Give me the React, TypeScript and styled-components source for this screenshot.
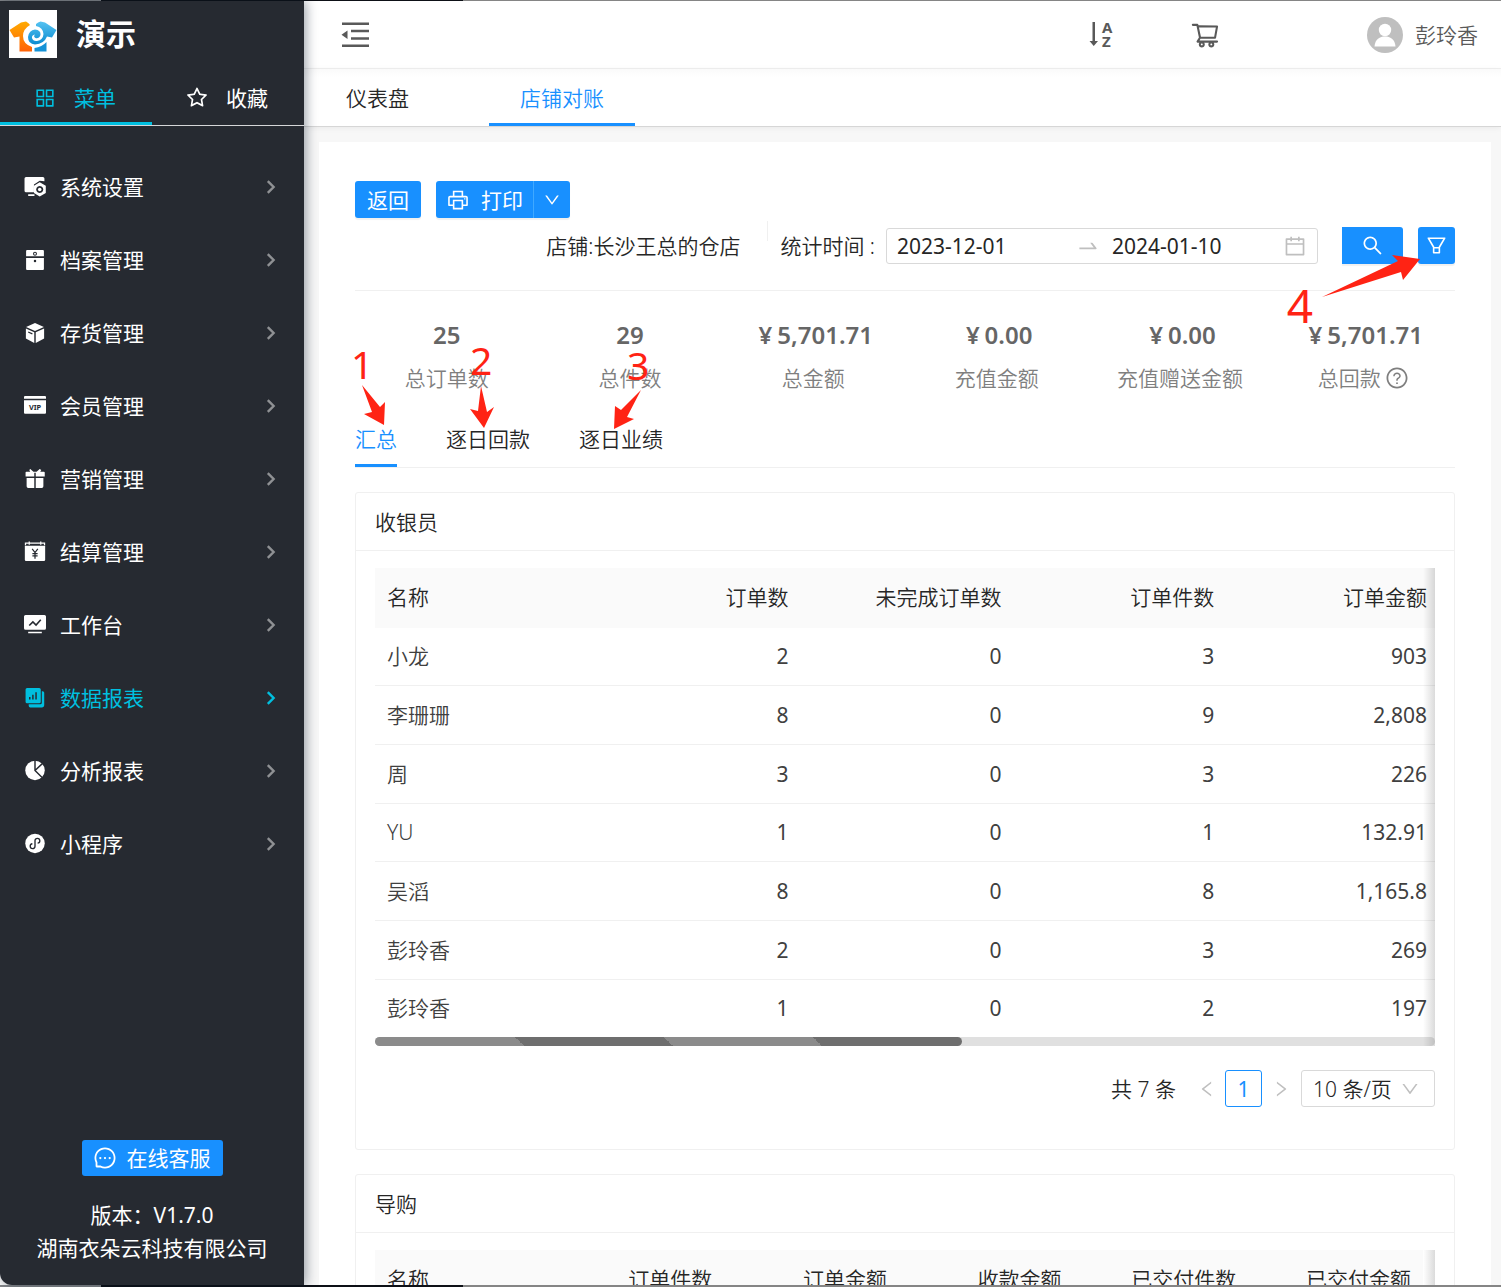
import React from 'react';
import styled, { createGlobalStyle, css } from 'styled-components';
import {
  AiOutlineAppstore,
  AiOutlineCalendar,
  AiOutlineDown,
  AiOutlineFilter,
  AiOutlineLeft,
  AiOutlineMessage,
  AiOutlinePrinter,
  AiOutlineQuestionCircle,
  AiOutlineRight,
  AiOutlineSearch,
  AiOutlineShoppingCart,
  AiOutlineStar,
  AiOutlineSwapRight,
} from 'react-icons/ai';

const color = {
  blue: '#1890ff',
  cyan: '#00bfdf',
  side: '#262a31',
  text: '#262626',
  line: '#f0f0f0',
  border: '#d9d9d9',
  red: '#ff2314',
};

const GlobalStyle = createGlobalStyle`
  *, *::before, *::after { box-sizing: border-box; }
  body {
    margin: 0;
    background: #f7f7f7;
    color: ${color.text};
    font: 400 21px/32px "Noto Sans", "Noto Sans CJK SC", sans-serif;
  }
  button, input, select { font: inherit; color: inherit; margin: 0; }
  button { cursor: pointer; border: 0; padding: 0; background: none; }
  svg { display: block; flex: none; }
`;

/* ---------- frame ---------- */

const Page = styled.div`
  display: flex;
  flex-direction: column;
  height: 100vh;
  overflow: hidden;
`;

const Edge = styled.div<{ $size: number; $stop: number }>`
  flex: none;
  height: ${(p) => p.$size}px;
  background: linear-gradient(90deg, #85878a 101px, #0d1016 101px, #0d1016 ${(p) => p.$stop}px, #858585 ${(p) => p.$stop}px);
`;

const Body = styled.div`
  flex: 1;
  display: flex;
  min-height: 0;
  background: #f7f7f7;
`;

/* ---------- sidebar ---------- */

const Sidebar = styled.aside`
  flex: none;
  width: 304px;
  display: flex;
  flex-direction: column;
  background: ${color.side};
  color: #fff;
  border-bottom-left-radius: 12px;
  box-shadow: 2px 0 12px rgba(0, 21, 41, 0.4);
  z-index: 2;
`;

const Brand = styled.div`
  display: flex;
  align-items: center;
  gap: 19px;
  height: 66px;
  padding: 0 9px;
  font-size: 30px;
  font-weight: 700;
`;

const SideTabs = styled.div`
  display: grid;
  grid-template-columns: 1fr 1fr;
  height: 59px;
  border-bottom: 1px solid #d5d6d8;
`;

const SideTab = styled.button<{ $active?: boolean }>`
  display: flex;
  align-items: center;
  justify-content: center;
  gap: 17px;
  padding: 4px 3px 0 0;
  color: ${(p) => (p.$active ? color.cyan : '#fff')};
  box-shadow: ${(p) => (p.$active ? `inset 0 -3px ${color.cyan}` : 'none')};
`;

const Menu = styled.nav`
  flex: 1;
  padding-top: 24px;
`;

const MenuItem = styled.button<{ $active?: boolean }>`
  display: flex;
  align-items: center;
  gap: 14px;
  width: 100%;
  height: 73px;
  padding: 0 28px 0 24px;
  text-align: left;
  color: ${(p) => (p.$active ? color.cyan : '#fff')};
`;

const MenuText = styled.span`
  flex: 1;
`;

const SideFoot = styled.div`
  display: flex;
  flex-direction: column;
  align-items: center;
  padding-bottom: 20px;
  line-height: 33px;
`;

const SupportButton = styled.button`
  display: flex;
  align-items: center;
  gap: 10px;
  height: 36px;
  padding: 0 12px 0 11px;
  margin-bottom: 23px;
  border-radius: 3px;
  background: ${color.blue};
  color: #fff;
`;

/* ---------- header ---------- */

const Main = styled.main`
  flex: 1;
  min-width: 0;
  display: flex;
  flex-direction: column;
`;

const Header = styled.header`
  flex: none;
  display: flex;
  align-items: center;
  height: 68px;
  padding: 0 23px 0 37px;
  background: #fff;
  border-bottom: 1px solid ${color.line};
  color: #595959;
`;

const Spacer = styled.div`
  flex: 1;
`;

const HeaderTools = styled.div`
  display: flex;
  align-items: center;
  gap: 75px;
  margin-right: 147px;
`;

const User = styled.button`
  display: flex;
  align-items: center;
  gap: 12px;
  font-weight: 350;
`;

const PageTabs = styled.nav`
  flex: none;
  display: flex;
  gap: 49px;
  height: 58px;
  padding-left: 11px;
  background: linear-gradient(#fafafa, #fff 8px);
  border-bottom: 1px solid #d6d6d6;
  box-shadow: 0 1px 6px rgba(0, 0, 0, 0.06);
`;

const PageTab = styled.button<{ $active?: boolean }>`
  padding: 0 31px;
  font-weight: 350;
  color: ${(p) => (p.$active ? color.blue : color.text)};
  box-shadow: ${(p) => (p.$active ? `inset 0 -3px ${color.blue}` : 'none')};
`;

/* ---------- content ---------- */

const Panel = styled.section`
  flex: 1;
  min-height: 0;
  overflow: hidden;
  margin: 15px 10px 0 15px;
  padding: 39px 36px 0;
  background: #fff;
  font-weight: 350;
`;

const Actions = styled.div`
  display: flex;
  gap: 15px;
`;

const Button = styled.button<{ $pad: number }>`
  display: flex;
  align-items: center;
  gap: 11px;
  height: 37px;
  padding: 0 ${(p) => p.$pad}px;
  border-radius: 3px;
  background: ${color.blue};
  color: #fff;
  font-weight: 400;
  box-shadow: 0 2px 1px rgba(0, 0, 0, 0.06);
`;

const SearchButton = styled(Button)`
  border-radius: 0 3px 3px 0;
`;

const Split = styled.div`
  display: flex;
  ${Button}:first-child { border-radius: 3px 0 0 3px; }
  ${Button}:last-child { border-radius: 0 3px 3px 0; border-left: 1px solid #40a9ff; }
`;

const Filters = styled.div`
  position: relative;
  display: flex;
  align-items: center;
  justify-content: flex-end;
  height: 73px;
  padding: 3px 0 20px;
  border-bottom: 1px solid ${color.line};
`;

const Divider = styled.i`
  align-self: flex-start;
  width: 1px;
  height: 20px;
  margin: 0 12px 0 27px;
  background: ${color.line};
`;

const RangeLabel = styled.label`
  margin-right: 11px;
`;

const Range = styled.div`
  display: flex;
  align-items: center;
  width: 432px;
  height: 36px;
  margin-right: 24px;
  padding: 0 10px;
  border: 1px solid ${color.border};
  border-radius: 3px;
  color: #bfbfbf;
`;

const DateInput = styled.input`
  flex: 1;
  min-width: 0;
  padding: 0;
  border: 0;
  outline: 0;
  background: none;
  color: ${color.text};
  font-weight: 400;
`;

const RangeArrow = styled.span`
  margin: 0 12px 0 8px;
`;

const ButtonGap = styled.div`
  display: flex;
  gap: 15px;
`;

const Stats = styled.dl`
  display: grid;
  grid-template-columns: repeat(6, 1fr);
  margin: 0;
  padding-top: 22px;
  text-align: center;
`;

const Stat = styled.div`
  display: flex;
  flex-direction: column-reverse;
`;

const StatLabel = styled.dt`
  display: flex;
  align-items: center;
  justify-content: center;
  gap: 4px;
  height: 42px;
  color: #7f7f7f;
`;

const StatValue = styled.dd`
  margin: 0;
  height: 44px;
  line-height: 44px;
  font-size: 24px;
  font-weight: 600;
  color: #666;
`;

const Currency = styled.span`
  margin: 0 5px;
`;

const Tabs = styled.div`
  position: relative;
  display: flex;
  gap: 49px;
  height: 69px;
  border-bottom: 1px solid ${color.line};
`;

const Tab = styled.button<{ $active?: boolean }>`
  padding-top: 11px;
  font-weight: 350;
  color: ${(p) => (p.$active ? color.blue : color.text)};
  box-shadow: ${(p) => (p.$active ? `inset 0 -3px ${color.blue}` : 'none')};
`;

const Card = styled.section`
  margin-top: 24px;
  border: 1px solid ${color.line};
  border-radius: 3px;
`;

const CardTitle = styled.h2`
  margin: 0;
  height: 58px;
  padding: 0 19px;
  border-bottom: 1px solid ${color.line};
  font-size: 21px;
  font-weight: 350;
  line-height: 59px;
`;

const CardBody = styled.div`
  padding: 17px 19px 42px;
`;

const TableWrap = styled.div`
  position: relative;
  overflow: hidden;
  &::after {
    content: '';
    position: absolute;
    inset: 0 0 0 auto;
    width: 12px;
    background: linear-gradient(90deg, transparent, rgba(0, 0, 0, 0.14));
  }
`;

const Table = styled.table<{ $height: number; $offset: number }>`
  width: calc(100% + ${(p) => p.$offset}px);
  height: ${(p) => p.$height}px;
  table-layout: fixed;
  border-collapse: collapse;
`;

const cell = css`
  padding: 0 12px;
  font-weight: 350;
  white-space: nowrap;
  text-align: right;
  border-bottom: 1px solid ${color.line};
  &:first-child { text-align: left; }
`;

const HeadCell = styled.th`
  ${cell}
  height: 59px;
  background: #fafafa;
  border-bottom-color: #fafafa;
`;

const Cell = styled.td`
  ${cell}
  color: #404040;
  &:not(:first-child) { font-weight: 400; }
  tr:last-child > & { border-bottom: 0; }
`;

const ScrollTrack = styled.div`
  height: 9px;
  border-radius: 5px;
  background: #e0e0e0;
`;

const ScrollThumb = styled.div`
  width: 55.4%;
  height: 9px;
  border-radius: 5px;
  background: linear-gradient(45deg, #8b8b8b 25%, #6e6e6e 25%, #6e6e6e 50%, #8b8b8b 50%, #8b8b8b 75%, #6e6e6e 75%);
`;

const Pager = styled.div`
  display: flex;
  align-items: center;
  justify-content: flex-end;
  height: 37px;
  margin-top: 24px;
`;

const PageArrow = styled.button`
  display: flex;
  justify-content: center;
  width: 37px;
  color: #bfbfbf;
`;

const PageNumber = styled.button`
  width: 37px;
  height: 37px;
  border: 1px solid ${color.blue};
  border-radius: 3px;
  color: ${color.blue};
  font-weight: 400;
`;

const Total = styled.span`
  margin-right: 12px;
`;

const SizeBox = styled.div`
  position: relative;
  width: 134px;
  height: 37px;
  margin-left: 2px;
  border: 1px solid ${color.border};
  border-radius: 3px;
`;

const SizeSelect = styled.select`
  appearance: none;
  width: 100%;
  height: 100%;
  padding: 0 11px;
  border: 0;
  outline: 0;
  background: none;
  font-weight: 350;
`;

const SizeArrow = styled.span`
  position: absolute;
  right: 14px;
  top: 8px;
  color: #bfbfbf;
  pointer-events: none;
`;

/* ---------- red callouts laid over the content ---------- */

const Callout = styled.div<{ $x: number; $y: number; $fromRight?: boolean }>`
  position: absolute;
  z-index: 3;
  top: ${(p) => p.$y}px;
  ${(p) => (p.$fromRight ? 'right' : 'left')}: ${(p) => p.$x}px;
  color: ${color.red};
  pointer-events: none;
`;

const CalloutNumber = styled(Callout)<{ $size: number }>`
  font-size: ${(p) => p.$size}px;
  font-weight: 400;
  line-height: 40px;
`;

/* ---------- drawings ---------- */

const Logo = () => (
  <svg width="48" height="48" viewBox="0 0 48 48" aria-hidden="true">
    <defs>
      <linearGradient id="logo-warm" x1="0" y1="0" x2="0" y2="1">
        <stop offset="0" stopColor="#ffab00" />
        <stop offset="1" stopColor="#ff6208" />
      </linearGradient>
      <linearGradient id="logo-cool" x1="0" y1="0" x2="0" y2="1">
        <stop offset="0" stopColor="#55c3f2" />
        <stop offset="1" stopColor="#0c8bd0" />
      </linearGradient>
    </defs>
    <rect width="48" height="48" fill="#fff" />
    <path d="M12 12.500 L17 11.500 Q20 13 21 15 Q14 19 14 26 Q14 34 23 37 V41.500 H10.500 V26.500 L5 27.500 L0.500 20 Z" fill="url(#logo-warm)" />
    <path d="M27 14 Q29 12 31.500 11.500 L36 12.500 L47.500 20 L43 27.500 L38 26.500 Q35 34 26 34.500 Q19 34 19 27 Q20 20 26 19.500 Q32 20 31.500 25 Q30 29 26.500 28 Q24 26.500 26 24.500 Q22.500 25 23 28 Q24 31.500 28 31 Q34 30 34.500 24 Q34 17.500 27 16 Z" fill="url(#logo-cool)" />
    <path d="M25.500 38 Q33 37 37.500 32 V41.500 H25.500 Z" fill="#1592d6" />
  </svg>
);

const FoldIcon = () => (
  <svg width="28" height="26" viewBox="0 0 28 26" fill="#595959" aria-hidden="true">
    <path d="M1 .5h27v2.500H1zM10 7.800h18v2.500H10zM10 15.200h18v2.500H10zM1 22.500h27V25H1zM.5 12.700L6.500 8.500v8.500z" />
  </svg>
);

const SortIcon = () => (
  <svg width="26" height="30" viewBox="0 0 26 30" fill="#595959" aria-hidden="true">
    <path d="M3.500 2h2.500v19h3L4.750 26 .5 21h3z" />
    <text x="13" y="13" fontSize="15" fontWeight="700" fontFamily="Noto Sans, sans-serif">A</text>
    <text x="13" y="27" fontSize="15" fontWeight="700" fontFamily="Noto Sans, sans-serif">Z</text>
  </svg>
);

const Avatar = () => (
  <svg width="36" height="36" viewBox="0 0 36 36" aria-hidden="true">
    <circle cx="18" cy="18" r="18" fill="#bfbfbf" />
    <circle cx="18" cy="13" r="6.200" fill="#fff" />
    <path d="M7.500 29.500C8 22 13 19.500 18 19.500S28 22 28.500 29.500z" fill="#fff" />
  </svg>
);

const Chevron = ({ active }: { active?: boolean }) => (
  <svg width="10" height="14" viewBox="0 0 10 14" fill="none" stroke={active ? color.cyan : '#8f9194'} strokeWidth="2.400" aria-hidden="true">
    <path d="M1.800 1.200L7.600 7 1.800 12.800" />
  </svg>
);

const d = color.side;

const menuIcons: Record<string, React.ReactNode> = {
  settings: (
    <>
      <path d="M2 1h16a1.500 1.500 0 0 1 1.500 1.500V5L15 4.500 9.500 8v7.500H2A1.500 1.500 0 0 1 .5 14V2.500A1.500 1.500 0 0 1 2 1zM4 17.500h6v1.500H4z" />
      <path fillRule="evenodd" d="M15 6l5.800 3.300v6.900L15 19.500l-5.500-3.300V9.300zM15 9.500a3.400 3.400 0 1 0 .01 0z" />
      <circle cx="15" cy="12.900" r="1.700" />
    </>
  ),
  archive: (
    <>
      <path d="M3 1h15a1 1 0 0 1 1 1v5H2V2a1 1 0 0 1 1-1zM2 8.500h17V19a1 1 0 0 1-1 1H3a1 1 0 0 1-1-1z" />
      <circle cx="10.500" cy="4.500" r="1.400" fill="none" stroke={d} />
      <circle cx="10.500" cy="11.500" r="1.200" fill={d} />
    </>
  ),
  stock: (
    <>
      <path d="M10.500 1L19 4.800 10.500 8.500 2 4.800zM1.800 6.200l8 3.600V20l-8-4.200zM19.200 6.200l-8 3.600V20l8-4.200z" />
      <path d="M4 9.500l4 1.800" stroke={d} strokeWidth="1.200" />
    </>
  ),
  member: (
    <>
      <path d="M1 1h19a1 1 0 0 1 1 1v1.500H0V2a1 1 0 0 1 1-1zM0 5h21v12a1 1 0 0 1-1 1H1a1 1 0 0 1-1-1z" />
      <text x="10.500" y="14" textAnchor="middle" fontSize="7" fontWeight="700" fill={d}>VIP</text>
    </>
  ),
  gift: (
    <path d="M6 1l3 2.500h3L15 1l1.500 1-1 1.500H19a.8.8 0 0 1 .8.8V8h-8.600V4.500H9.800V8H1.500V4.300a.8.8 0 0 1 .8-.8H6L5 2zM2.500 9.500h7.300V19H4a1.500 1.500 0 0 1-1.500-1.500zM11.200 9.500h7.300v8A1.500 1.500 0 0 1 17 19h-5.800z" />
  ),
  settle: (
    <>
      <path d="M.8 4.500h19.400V18a1.200 1.200 0 0 1-1.200 1.200H2A1.200 1.200 0 0 1 .8 18z" />
      <path d="M1.400 4V2h18.200v2M5 .5v3M16 .5v3" fill="none" stroke="currentColor" strokeWidth="1.200" />
      <path d="M7.800 7.500l2.700 3.500 2.700-3.500M10.500 11v6M8 12h5M8 14.300h5" fill="none" stroke={d} strokeWidth="1.200" />
    </>
  ),
  desk: (
    <>
      <path d="M1.500 1h18A1.500 1.500 0 0 1 21 2.500v11a1.500 1.500 0 0 1-1.500 1.500h-18A1.500 1.500 0 0 1 0 13.500v-11A1.500 1.500 0 0 1 1.500 1zM4 17h13v1.300H4z" />
      <path d="M5 11l3.500-3.500 3 3L16 5.500" fill="none" stroke={d} strokeWidth="1.500" />
    </>
  ),
  data: (
    <>
      <path d="M3 1h11.500a1.500 1.500 0 0 1 1.500 1.500V14a1.500 1.500 0 0 1-1.500 1.500H3A1.500 1.500 0 0 1 1.500 14V2.500A1.500 1.500 0 0 1 3 1zM17 4h.8a1.500 1.500 0 0 1 1.500 1.500V17.500a2 2 0 0 1-2 2H6A1.500 1.500 0 0 1 4.500 18v-1.500h11a1.500 1.500 0 0 0 1.500-1.500z" />
      <path d="M5.500 12V9.500M8.500 12V7.500M11.500 12V5" stroke={d} strokeWidth="1.400" />
    </>
  ),
  pie: (
    <>
      <circle cx="10.500" cy="10" r="9.300" />
      <path d="M10.500 0v10l7.500 7.500M10.500 10l7.500-7" fill="none" stroke={d} strokeWidth="1.400" />
    </>
  ),
  mini: (
    <>
      <circle cx="10.500" cy="10" r="9.300" />
      <path d="M8 10.300A2.300 2.300 0 1 0 10.500 12.800V7.200A2.300 2.300 0 1 1 13 9.700" fill="none" stroke={d} strokeWidth="1.300" />
    </>
  ),
};

/* ---------- data ---------- */

const menu = [
  ['settings', '系统设置'],
  ['archive', '档案管理'],
  ['stock', '存货管理'],
  ['member', '会员管理'],
  ['gift', '营销管理'],
  ['settle', '结算管理'],
  ['desk', '工作台'],
  ['data', '数据报表'],
  ['pie', '分析报表'],
  ['mini', '小程序'],
];

const stats: { value: string; label: string; money?: boolean; help?: boolean }[] = [
  { value: '25', label: '总订单数' },
  { value: '29', label: '总件数' },
  { value: '5,701.71', label: '总金额', money: true },
  { value: '0.00', label: '充值金额', money: true },
  { value: '0.00', label: '充值赠送金额', money: true },
  { value: '5,701.71', label: '总回款', money: true, help: true },
];

const cashierHead = ['名称', '订单数', '未完成订单数', '订单件数', '订单金额'];
const cashiers = [
  ['小龙', '2', '0', '3', '903'],
  ['李珊珊', '8', '0', '9', '2,808'],
  ['周', '3', '0', '3', '226'],
  ['YU', '1', '0', '1', '132.91'],
  ['吴滔', '8', '0', '8', '1,165.8'],
  ['彭玲香', '2', '0', '3', '269'],
  ['彭玲香', '1', '0', '2', '197'],
];
const guideHead = ['名称', '订单件数', '订单金额', '收款金额', '已交付件数', '已交付金额'];

const HeadRow = ({ names }: { names: string[] }) => (
  <thead>
    <tr>
      {names.map((n) => (
        <HeadCell key={n} scope="col">{n}</HeadCell>
      ))}
    </tr>
  </thead>
);

const Arrow = ({ x, y, w, h, points, fromRight }: { x: number; y: number; w: number; h: number; points: string; fromRight?: boolean }) => (
  <Callout $x={x} $y={y} $fromRight={fromRight}>
    <svg width={w} height={h} viewBox={`0 0 ${w} ${h}`} fill="currentColor" aria-hidden="true">
      <polygon points={points} />
    </svg>
  </Callout>
);

export default function App() {
  return (
    <Page>
      <GlobalStyle />
      <Edge $size={1} $stop={463} />
      <Body>
        <Sidebar>
          <Brand>
            <Logo />
            <span>演示</span>
          </Brand>
          <SideTabs>
            <SideTab $active>
              <AiOutlineAppstore size={24} />
              菜单
            </SideTab>
            <SideTab>
              <AiOutlineStar size={24} />
              收藏
            </SideTab>
          </SideTabs>
          <Menu>
            {menu.map(([icon, label]) => {
              const active = icon === 'data';
              return (
                <MenuItem key={label} $active={active}>
                  <svg width="22" height="22" viewBox="0 0 21 21" fill="currentColor" aria-hidden="true">
                    {menuIcons[icon]}
                  </svg>
                  <MenuText>{label}</MenuText>
                  <Chevron active={active} />
                </MenuItem>
              );
            })}
          </Menu>
          <SideFoot>
            <SupportButton>
              <AiOutlineMessage size={24} />
              在线客服
            </SupportButton>
            <span>版本：V1.7.0</span>
            <span>湖南衣朵云科技有限公司</span>
          </SideFoot>
        </Sidebar>

        <Main>
          <Header>
            <button aria-label="收起菜单">
              <FoldIcon />
            </button>
            <Spacer />
            <HeaderTools>
              <button aria-label="排序">
                <SortIcon />
              </button>
              <button aria-label="购物车">
                <AiOutlineShoppingCart size={30} />
              </button>
            </HeaderTools>
            <User>
              <Avatar />
              彭玲香
            </User>
          </Header>
          <PageTabs>
            <PageTab>仪表盘</PageTab>
            <PageTab $active>店铺对账</PageTab>
          </PageTabs>

          <Panel>
            <Actions>
              <Button $pad={12}>返回</Button>
              <Split>
                <Button $pad={10}>
                  <AiOutlinePrinter size={24} />
                  打印
                </Button>
                <Button $pad={9} aria-label="更多打印选项">
                  <AiOutlineDown size={18} />
                </Button>
              </Split>
            </Actions>

            <Filters>
              <span>店铺:长沙王总的仓店</span>
              <Divider />
              <RangeLabel htmlFor="date-from">统计时间 :</RangeLabel>
              <Range>
                <DateInput id="date-from" defaultValue="2023-12-01" />
                <RangeArrow>
                  <AiOutlineSwapRight size={24} />
                </RangeArrow>
                <DateInput aria-label="结束日期" defaultValue="2024-01-10" />
                <AiOutlineCalendar size={24} />
              </Range>
              <ButtonGap>
                <SearchButton $pad={19} aria-label="查询">
                  <AiOutlineSearch size={23} />
                </SearchButton>
                <Button $pad={7} aria-label="筛选">
                  <AiOutlineFilter size={23} />
                </Button>
              </ButtonGap>
              <CalloutNumber $x={142} $y={67} $fromRight $size={46}>4</CalloutNumber>
              <Arrow x={34} y={37} w={100} h={43} fromRight points="1,42 77,6 71,0 99,4 82,25 80,17" />
            </Filters>

            <Stats>
              {stats.map(({ value, label, money, help }) => (
                <Stat key={label}>
                  <StatLabel>
                    {label}
                    {help && <AiOutlineQuestionCircle size={24} />}
                  </StatLabel>
                  <StatValue>
                    {money && <Currency>¥</Currency>}
                    {value}
                  </StatValue>
                </Stat>
              ))}
            </Stats>

            <Tabs>
              <Tab $active>汇总</Tab>
              <Tab>逐日回款</Tab>
              <Tab>逐日业绩</Tab>
              <CalloutNumber $x={-4} $y={-55} $size={39}>1</CalloutNumber>
              <Arrow x={7} y={-14} w={24} h={41} points="0,0 18,22 23,17 22,40 2,29 10,27" />
              <CalloutNumber $x={115} $y={-59} $size={39}>2</CalloutNumber>
              <Arrow x={115} y={-13} w={25} h={43} points="11,0 17,26 24,21 14,42 0,23 8,25" />
              <CalloutNumber $x={272} $y={-54} $size={39}>3</CalloutNumber>
              <Arrow x={259} y={-9} w={28} h={40} points="27,0 13,27 20,29 0,39 1,16 7,20" />
            </Tabs>

            <Card>
              <CardTitle>收银员</CardTitle>
              <CardBody>
                <TableWrap>
                  <Table $height={469} $offset={4}>
                    <HeadRow names={cashierHead} />
                    <tbody>
                      {cashiers.map((row, r) => (
                        <tr key={r}>
                          {row.map((v, c) => (
                            <Cell key={c}>{v}</Cell>
                          ))}
                        </tr>
                      ))}
                    </tbody>
                  </Table>
                  <ScrollTrack>
                    <ScrollThumb />
                  </ScrollTrack>
                </TableWrap>
                <Pager>
                  <Total>共 7 条</Total>
                  <PageArrow aria-label="上一页">
                    <AiOutlineLeft size={20} />
                  </PageArrow>
                  <PageNumber>1</PageNumber>
                  <PageArrow aria-label="下一页">
                    <AiOutlineRight size={20} />
                  </PageArrow>
                  <SizeBox>
                    <SizeSelect aria-label="每页条数" defaultValue="10">
                      <option value="10">10 条/页</option>
                    </SizeSelect>
                    <SizeArrow>
                      <AiOutlineDown size={20} />
                    </SizeArrow>
                  </SizeBox>
                </Pager>
              </CardBody>
            </Card>

            <Card>
              <CardTitle>导购</CardTitle>
              <CardBody>
                <TableWrap>
                  <Table $height={59} $offset={-12}>
                    <HeadRow names={guideHead} />
                  </Table>
                </TableWrap>
              </CardBody>
            </Card>
          </Panel>
        </Main>
      </Body>
      <Edge $size={2} $stop={463} />
    </Page>
  );
}
